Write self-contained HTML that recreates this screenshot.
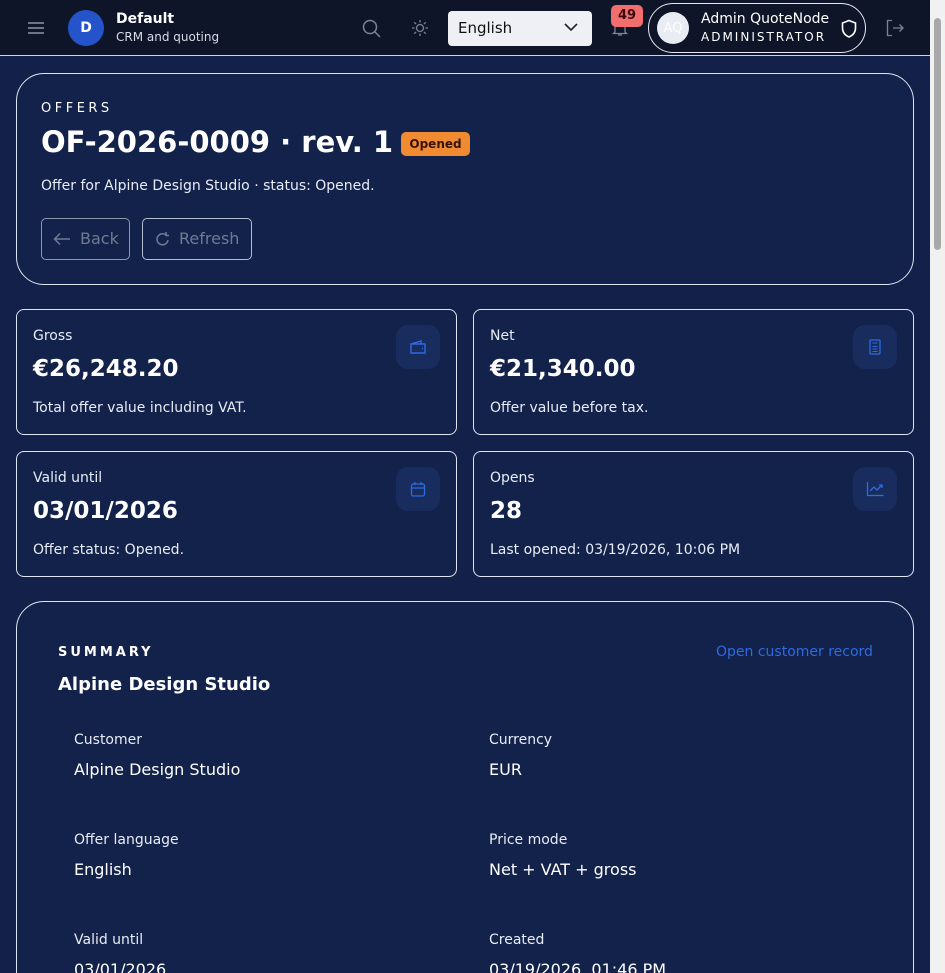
<!DOCTYPE html>
<html style="overflow:hidden;width:945px;height:973px"><head><meta charset="utf-8"><style>
*{box-sizing:border-box;margin:0;padding:0}
body{width:945px;height:973px;overflow:hidden;background:#13214a;font-family:"DejaVu Sans","Liberation Sans",sans-serif;color:#fff;position:relative}
.hdr{position:absolute;left:0;top:0;width:930px;height:56px;background:#0e1528;border-bottom:1px solid #cdd6e8}
.sb{position:absolute;right:0;top:0;width:15px;height:973px;background:#f1f1f1}
.sb div{position:absolute;left:4px;top:18px;width:7px;height:232px;background:#a8a8a8;border-radius:4px}
.card{position:absolute;border:1px solid #dfe5f0;border-radius:8px;background:#13224b}
.abs{position:absolute}
.lbl{font-size:14px;color:#e8ecf5}
.big{font-size:23px;font-weight:bold}
.ic{position:absolute;width:44px;height:44px;border-radius:12px;background:#182c5e;display:flex;align-items:center;justify-content:center}
.k{font-size:14px;color:#e8ecf5}
.v{font-size:16px;color:#fff}
</style></head><body>
<div class="hdr">
 <svg class="abs" style="left:27px;top:20px" width="18" height="16"><path d="M1 3h16M1 8h16M1 13h16" stroke="#8b94a8" stroke-width="1.6"/></svg>
 <div class="abs" style="left:68px;top:10px;width:36px;height:36px;border-radius:50%;background:#2553c9;font-size:14px;font-weight:bold;display:flex;align-items:center;justify-content:center">D</div>
 <div class="abs" style="left:116px;top:11px;font-size:14px;font-weight:bold">Default</div>
 <div class="abs" style="left:116px;top:30px;font-size:12px;color:#d6dbe6">CRM and quoting</div>
 <svg class="abs" style="left:362px;top:19px" width="20" height="20"><circle cx="8" cy="8" r="6.5" fill="none" stroke="#7b8497" stroke-width="1.5"/><path d="M13 13l5 5" stroke="#7b8497" stroke-width="1.5"/></svg>
 <svg class="abs" style="left:411px;top:19px" width="18" height="18"><circle cx="9" cy="9" r="3.5" fill="none" stroke="#7b8497" stroke-width="1.3"/><path d="M9 1v2.5M9 14.5V17M1 9h2.5M14.5 9H17M3.3 3.3l1.8 1.8M12.9 12.9l1.8 1.8M3.3 14.7l1.8-1.8M12.9 5.1l1.8-1.8" stroke="#7b8497" stroke-width="1.3"/></svg>
 <div class="abs" style="left:448px;top:11px;width:144px;height:35px;border-radius:4px;background:#eef0f5;color:#111;font-size:15px;padding:8px 10px">English</div>
 <svg class="abs" style="left:564px;top:22px" width="14" height="10"><path d="M1 2l6 6 6-6" fill="none" stroke="#222" stroke-width="1.6"/></svg>
 <svg class="abs" style="left:611px;top:19px" width="18" height="18"><path d="M4 13V8a5 5 0 0110 0v5l1.5 1.5h-13zM7 16h4" fill="none" stroke="#7b8497" stroke-width="1.3"/></svg>
 <div class="abs" style="left:611px;top:5px;width:32px;height:22px;border-radius:5px;background:#f26d6d;color:#3a0b0b;font-size:13px;font-weight:bold;text-align:center;line-height:22px">49</div>
 <div class="abs" style="left:648px;top:3px;width:218px;height:50px;border:1.5px solid #e6e9f0;border-radius:25px"></div>
 <div class="abs" style="left:657px;top:12px;width:32px;height:32px;border-radius:50%;background:#e9ecf3;color:#fff;font-size:13px;display:flex;align-items:center;justify-content:center">AQ</div>
 <div class="abs" style="left:701px;top:11px;font-size:14px">Admin QuoteNode</div>
 <div class="abs" style="left:701px;top:30px;font-size:12px;letter-spacing:2px">ADMINISTRATOR</div>
 <svg class="abs" style="left:840px;top:19px" width="18" height="20"><path d="M9 1.5l6.5 2.5v5c0 4.5-3 7.5-6.5 9-3.5-1.5-6.5-4.5-6.5-9V4z" fill="none" stroke="#fff" stroke-width="1.6"/></svg>
 <svg class="abs" style="left:885px;top:19px" width="20" height="18"><path d="M7 1.5H2.5v15H7M8 9h10M14.5 5.5L18 9l-3.5 3.5" fill="none" stroke="#7b8497" stroke-width="1.3"/></svg>
</div>
<div class="sb"><div></div></div>

<div class="card" style="left:16px;top:73px;width:898px;height:212px;border-radius:28px">
 <div class="abs" style="left:24px;top:27px;font-size:13px;letter-spacing:3.5px">OFFERS</div>
 <div class="abs" style="left:24px;top:51px;font-size:29px;font-weight:bold">OF-2026-0009 · rev. 1</div>
 <div class="abs" style="left:384px;top:58px;width:69px;height:24px;border-radius:5px;background:#f08b32;color:#3a1200;font-size:12px;font-weight:bold;text-align:center;line-height:24px">Opened</div>
 <div class="abs" style="left:24px;top:104px;font-size:14px;color:#e8ecf5">Offer for Alpine Design Studio · status: Opened.</div>
 <div class="abs" style="left:24px;top:144px;width:89px;height:42px;border:1px solid #8d97b0;border-radius:5px;color:#6f7a93;font-size:16px;padding:10px 0 0 38px">Back</div>
 <svg class="abs" style="left:36px;top:158px" width="18" height="14"><path d="M17 7H2M7 1.5L1.5 7 7 12.5" fill="none" stroke="#6f7a93" stroke-width="1.5"/></svg>
 <div class="abs" style="left:125px;top:144px;width:110px;height:42px;border:1px solid #b5bdd0;border-radius:5px;color:#6f7a93;font-size:16px;padding:10px 0 0 36px">Refresh</div>
 <svg class="abs" style="left:138px;top:157px" width="16" height="16"><path d="M13 9a5.5 5.5 0 11-2-5M11 1v3.5h3" fill="none" stroke="#6f7a93" stroke-width="1.5"/></svg>
</div>

<div class="card" style="left:16px;top:309px;width:441px;height:126px">
 <div class="abs lbl" style="left:16px;top:18px">Gross</div>
 <div class="abs big" style="left:16px;top:46px">€26,248.20</div>
 <div class="abs lbl" style="left:16px;top:90px">Total offer value including VAT.</div>
 <div class="ic" style="left:379px;top:15px"><svg width="16" height="14"><path d="M1 4h14v9H1zM1 4l10-3v3M12 8.5h1" fill="none" stroke="#2f6ae0" stroke-width="1.4"/></svg></div>
</div>
<div class="card" style="left:473px;top:309px;width:441px;height:126px">
 <div class="abs lbl" style="left:16px;top:18px">Net</div>
 <div class="abs big" style="left:16px;top:46px">€21,340.00</div>
 <div class="abs lbl" style="left:16px;top:90px">Offer value before tax.</div>
 <div class="ic" style="left:379px;top:15px"><svg width="12" height="16"><rect x="1" y="1" width="10" height="14" rx="1" fill="none" stroke="#2f6ae0" stroke-width="1.3"/><path d="M3.5 4h5M3.5 7.5h5M3.5 10h5M3.5 12.5h5" stroke="#2f6ae0" stroke-width="1"/></svg></div>
</div>
<div class="card" style="left:16px;top:451px;width:441px;height:126px">
 <div class="abs lbl" style="left:16px;top:18px">Valid until</div>
 <div class="abs big" style="left:16px;top:46px">03/01/2026</div>
 <div class="abs lbl" style="left:16px;top:90px">Offer status: Opened.</div>
 <div class="ic" style="left:379px;top:15px"><svg width="16" height="16"><rect x="1.5" y="3" width="13" height="12" rx="2" fill="none" stroke="#2f6ae0" stroke-width="1.3"/><path d="M1.5 7h13M5 1v3M11 1v3" stroke="#2f6ae0" stroke-width="1.3"/></svg></div>
</div>
<div class="card" style="left:473px;top:451px;width:441px;height:126px">
 <div class="abs lbl" style="left:16px;top:18px">Opens</div>
 <div class="abs big" style="left:16px;top:46px">28</div>
 <div class="abs lbl" style="left:16px;top:90px">Last opened: 03/19/2026, 10:06 PM</div>
 <div class="ic" style="left:379px;top:15px"><svg width="18" height="16"><path d="M1.5 1v13.5h16M4 10l4-4 3 3 5-5M13 4h3v3" fill="none" stroke="#2f6ae0" stroke-width="1.3"/></svg></div>
</div>

<div class="card" style="left:16px;top:601px;width:898px;height:400px;border-radius:28px">
 <div class="abs" style="left:41px;top:43px;font-size:13px;font-weight:bold;letter-spacing:3px">SUMMARY</div>
 <div class="abs" style="left:699px;top:42px;font-size:14px;color:#2f6ae0">Open customer record</div>
 <div class="abs" style="left:41px;top:72px;font-size:18px;font-weight:bold">Alpine Design Studio</div>
 <div class="abs k" style="left:57px;top:130px">Customer</div>
 <div class="abs v" style="left:57px;top:158px">Alpine Design Studio</div>
 <div class="abs k" style="left:472px;top:130px">Currency</div>
 <div class="abs v" style="left:472px;top:158px">EUR</div>
 <div class="abs k" style="left:57px;top:230px">Offer language</div>
 <div class="abs v" style="left:57px;top:258px">English</div>
 <div class="abs k" style="left:472px;top:230px">Price mode</div>
 <div class="abs v" style="left:472px;top:258px">Net + VAT + gross</div>
 <div class="abs k" style="left:57px;top:330px">Valid until</div>
 <div class="abs v" style="left:57px;top:358px">03/01/2026</div>
 <div class="abs k" style="left:472px;top:330px">Created</div>
 <div class="abs v" style="left:472px;top:358px">03/19/2026, 01:46 PM</div>
</div>
</body></html>
